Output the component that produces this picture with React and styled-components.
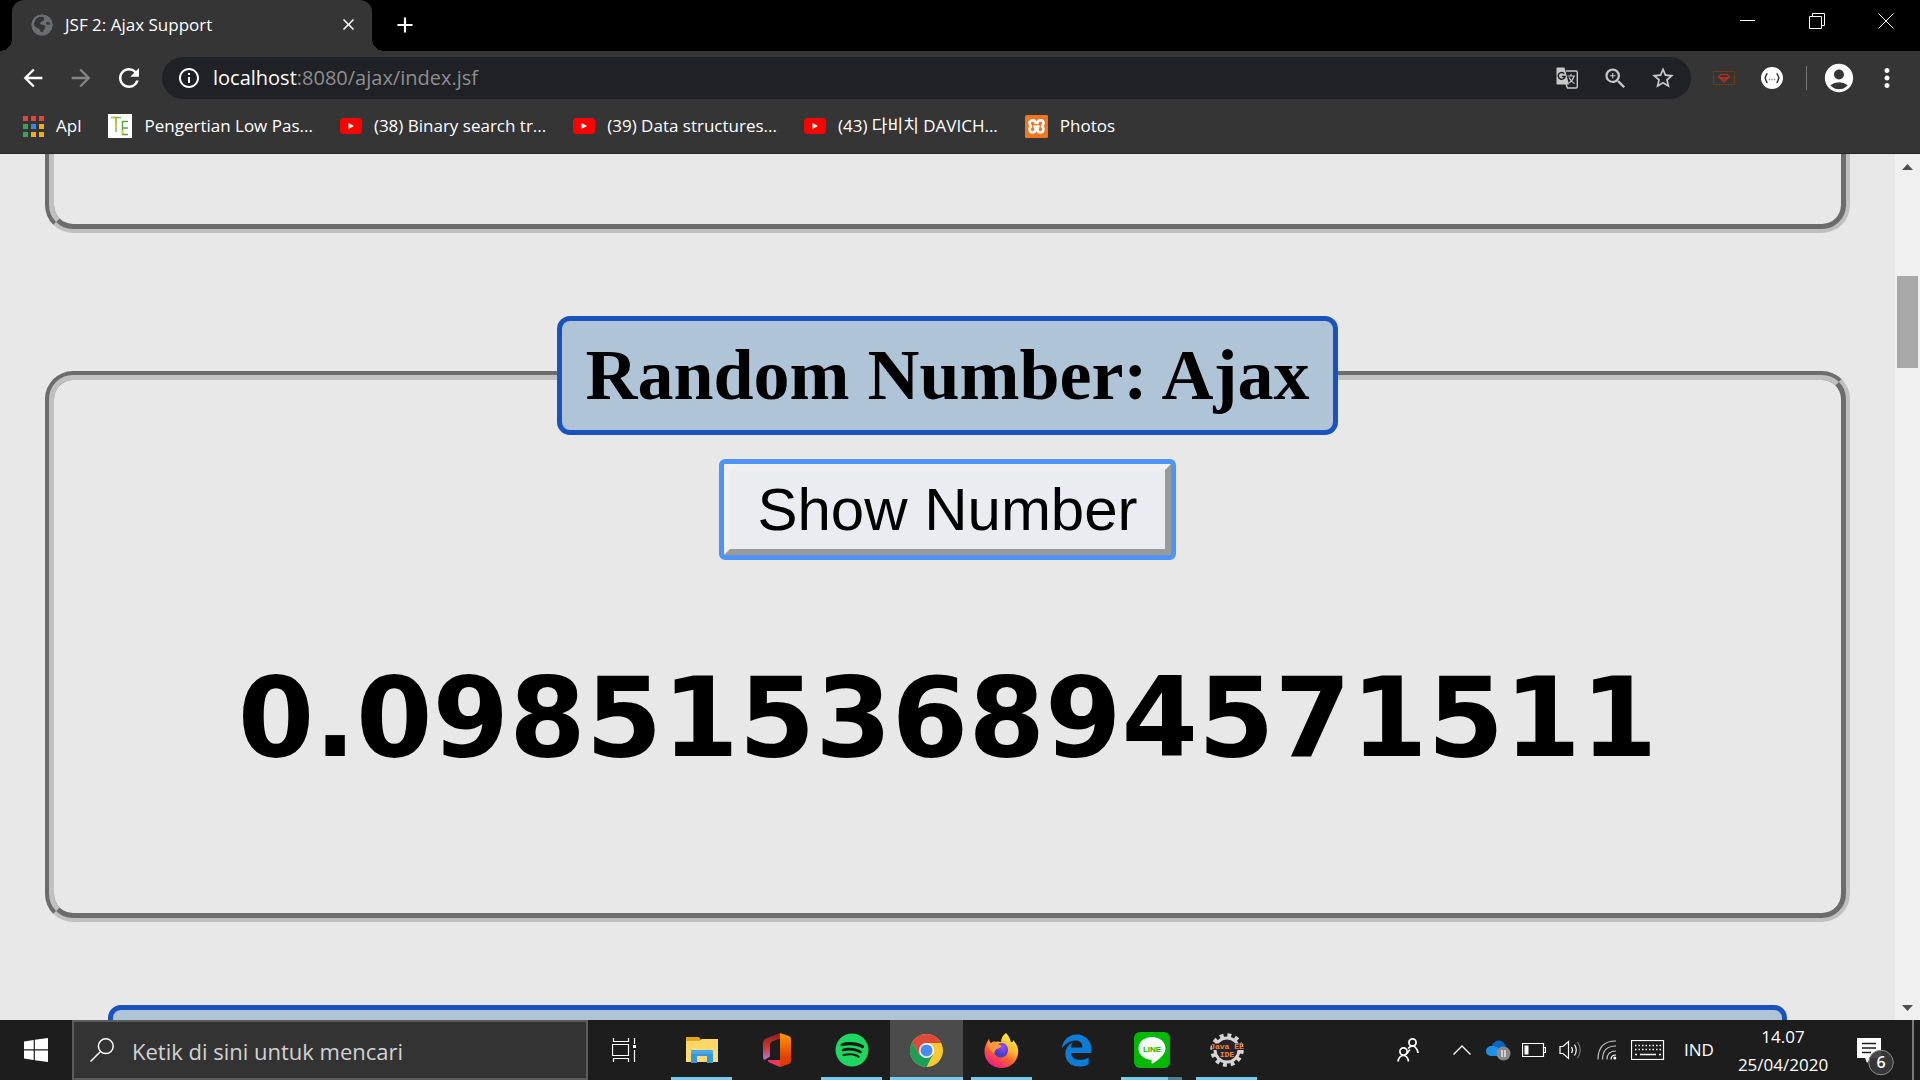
import React from "react";
import styled, { createGlobalStyle, css } from "styled-components";
import {
  MdArrowBack,
  MdArrowForward,
  MdRefresh,
  MdInfoOutline,
  MdZoomIn,
  MdStarBorder,
  MdAccountCircle,
  MdMoreVert,
  MdClose,
  MdAdd,
} from "react-icons/md";
import { FaSpotify, FaEdgeLegacy } from "react-icons/fa6";

const uiFont = `"Segoe UI", "Open Sans", "Noto Sans CJK KR", sans-serif`;

const GlobalStyle = createGlobalStyle`
  *, *::before, *::after { box-sizing: border-box; }
  body { margin: 0; background: #000; }
  svg { display: block; flex: none; }
`;

const Desktop = styled.div`
  display: flex;
  flex-direction: column;
  height: 100vh;
  overflow: hidden;
  font-family: ${uiFont};
`;

/* ---------- browser window ---------- */

const TabStrip = styled.header`
  display: flex;
  align-items: flex-start;
  height: 51px;
  flex: none;
  padding-left: 12px;
  background: #000;
`;

const Tab = styled.div`
  display: flex;
  align-items: center;
  width: 360px;
  height: 51px;
  padding: 0 12px 2px 19px;
  border-radius: 12px 12px 0 0;
  background: #353535;
  color: #fff;
  font-size: 17px;
  position: relative;

  &::before,
  &::after {
    content: "";
    position: absolute;
    bottom: 0;
    width: 12px;
    height: 12px;
  }
  &::before {
    left: -12px;
    background: radial-gradient(circle at 0 0, transparent 12px, #353535 12px);
  }
  &::after {
    right: -12px;
    background: radial-gradient(circle at 100% 0, transparent 12px, #353535 12px);
  }
`;

const TabTitle = styled.span`
  flex: 1;
  margin-left: 12px;
  white-space: nowrap;
`;

const IconButton = styled.button`
  display: flex;
  align-items: center;
  justify-content: center;
  width: ${(p) => p.$width || 48}px;
  height: ${(p) => p.$height || 42}px;
  flex: none;
  padding: 0;
  border: 0;
  background: none;
  color: ${(p) => p.$color || "#fff"};
`;

const WindowControls = styled.div`
  display: flex;
  margin-left: auto;
`;

const Toolbar = styled.nav`
  display: flex;
  align-items: center;
  height: 54px;
  flex: none;
  padding: 0 9px;
  background: #353535;
`;

const AddressBar = styled.div`
  display: flex;
  align-items: center;
  flex: 1;
  height: 42px;
  margin: 0 9px;
  padding: 0 4px 0 15px;
  border-radius: 21px;
  background: #202124;
`;

const Address = styled.div`
  flex: 1;
  margin-left: 12px;
  color: #8e8f91;
  font-size: 20px;
  line-height: 28px;
  white-space: nowrap;
  outline: none;
`;

const Host = styled.span`
  color: #fff;
`;

const Divider = styled.span`
  width: 1px;
  height: 24px;
  margin: 0 8px 0 10px;
  background: #77787a;
`;

const BookmarkBar = styled.nav`
  display: flex;
  align-items: center;
  gap: 27px;
  height: 49px;
  flex: none;
  padding: 0 23px 6px;
  border-bottom: 1px solid #262626;
  background: #353535;
`;

const Bookmark = styled.a`
  display: flex;
  align-items: center;
  gap: 12px;
  color: #fff;
  font-size: 17px;
  line-height: 24px;
  text-decoration: none;
  white-space: nowrap;
`;

/* ---------- web page ---------- */

const Viewport = styled.div`
  display: flex;
  flex: 1;
  min-height: 0;
  background: #e8e8e8;
`;

const Page = styled.main`
  flex: 1;
  min-width: 0;
  overflow: hidden;
  padding: 0 45px;
  color: #000;
  text-align: center;
`;

const Panel = styled.fieldset`
  min-width: 0;
  margin: 0 0 83px;
  padding: 0 54px ${(p) => p.$bottom || 0}px;
  border: 9px groove #c0c0c0;
  border-radius: 28px;

  ${(p) =>
    p.$continued &&
    css`
      height: 79px;
      border-top: 0;
      border-radius: 0 0 28px 28px;
    `}
`;

const PanelTitle = styled.legend`
  width: ${(p) => (p.$wide ? "100%" : "auto")};
  min-height: 119px;
  margin: 0 auto;
  padding: 13px 23px;
  border: 5px solid #1a53bf;
  border-radius: 13px;
  background: #b0c4d8;
  font: bold 72px/83px "Liberation Serif", "Times New Roman", serif;
`;

const PageButton = styled.button`
  display: block;
  margin: 29px auto 0;
  padding: 5px 27px;
  border: 6px solid;
  border-color: #f0f0f0 #9a9a9a #9a9a9a #f0f0f0;
  border-radius: 1px;
  outline: 5px solid #4f93f8;
  background: #ebebf2;
  color: #000;
  font: 60px/69px "Liberation Sans", Arial, sans-serif;
`;

const Result = styled.h2`
  margin: 98px 0 0;
  font: bold 110px/130px "DejaVu Sans", Verdana, sans-serif;
  white-space: nowrap;
`;

const ScrollTrack = styled.div`
  display: flex;
  flex-direction: column;
  align-items: center;
  width: 25px;
  flex: none;
  padding: 10px 0 9px;
  background: #f0f0f0;
`;

const ScrollThumb = styled.div`
  width: 21px;
  height: 92px;
  margin: 106px 0 auto;
  background: #a8a8a8;
`;

/* ---------- taskbar ---------- */

const Taskbar = styled.footer`
  display: flex;
  align-items: stretch;
  height: 60px;
  flex: none;
  background: #1d1d1d;
  color: #fff;
`;

const SearchBox = styled.label`
  display: flex;
  align-items: center;
  gap: 18px;
  width: 516px;
  padding: 0 16px;
  border: 2px solid #5c5c5c;
  background: #333;
`;

const SearchInput = styled.input`
  flex: 1;
  min-width: 0;
  padding: 2px 0 0;
  border: 0;
  outline: none;
  background: none;
  color: #fff;
  font: 22px/28px ${uiFont};

  &::placeholder {
    color: #d2d2d2;
    opacity: 1;
  }
`;

const Apps = styled.div`
  display: flex;
  gap: 2px;
  margin-left: 2px;
`;

const AppButton = styled.button`
  display: flex;
  flex-direction: column;
  align-items: center;
  justify-content: space-between;
  width: 73px;
  padding: 0;
  border: 0;
  background: ${(p) => (p.$state === "active" ? "#4b4b4b" : "none")};
  color: #fff;

  &::after {
    content: "";
    width: ${(p) => (p.$state === "active" ? 73 : 61)}px;
    height: 3px;
    background: ${(p) =>
      p.$grouped
        ? "linear-gradient(90deg, #76ccea 47px, #4c7f92 47px)"
        : p.$state
          ? "#76ccea"
          : "transparent"};
  }
`;

const AppIcon = styled.span`
  display: flex;
  align-items: center;
  justify-content: center;
  height: 57px;
  padding-top: 3px;
`;

const Tray = styled.div`
  display: flex;
  margin-left: auto;
`;

const TrayButton = styled(IconButton)`
  height: 60px;
  font: 17px/28px ${uiFont};
`;

const Clock = styled.time`
  display: flex;
  flex-direction: column;
  width: 110px;
  padding-top: 3px;
  font-size: 17px;
  line-height: 28px;
  text-align: center;
`;

const ShowDesktop = styled.button`
  width: 8px;
  padding: 0;
  border: 0;
  border-left: 2px solid #7a7a7a;
  background: none;
`;

/* ---------- drawings ---------- */

const GlobeIcon = () => (
  <svg width="22" height="22" viewBox="0 0 22 22">
    <circle cx="11" cy="11" r="10.5" fill="#6a6e73" />
    <path
      d="M8 3 C12 1.500 14 3 13 6 C12 8 9 7.500 9 9.500 C9 11.500 13 10 14 12 C15 14 13 15 12.500 17 C12 19 9 18.500 9 16 C8.500 14 4 14 3 11 C3 7 5 4 8 3 Z M15 8 L19 8.500 L18.500 11 L15.500 10.500 Z"
      fill="#353535"
    />
    <circle cx="11" cy="11" r="9.500" fill="none" stroke="#6a6e73" strokeWidth="2" />
  </svg>
);

const MinimizeIcon = () => (
  <svg width="16" height="16" viewBox="0 0 16 16">
    <path d="M0 7.500H15" stroke="#fff" />
  </svg>
);

const RestoreIcon = () => (
  <svg width="16" height="16" viewBox="0 0 16 16" fill="none" stroke="#fff">
    <path d="M.5 3.500H12.500V15.500H.5ZM3.500 3V.5H15.500V12.500H13" />
  </svg>
);

const CloseIcon = () => (
  <svg width="16" height="16" viewBox="0 0 16 16" stroke="#fff">
    <path d="M.5 .5 15.500 15.500M15.500 .5 .5 15.500" />
  </svg>
);

const TranslateIcon = () => (
  <svg width="22" height="22" viewBox="0 0 22 22">
    <path d="M10 4H20Q21.300 4 21.300 5.300V19.700Q21.300 21 20 21H11.500L10 17" fill="none" stroke="#c8c8c9" strokeWidth="1.400" />
    <path d="M1.500 .5H8.500L13 17.500H1.500Q.5 17.500 .5 16.500V1.500Q.5 .5 1.500 .5Z" fill="#c8c8c9" />
    <path d="M8.300 6.700A3.400 3.400 0 1 0 9 9.500H5.800" fill="none" stroke="#202124" strokeWidth="1.500" />
    <path d="M11.500 9H19M15 7V9M18 9Q16.500 14 13 16M13 10.500Q15 14.500 18.500 16.500" fill="none" stroke="#c8c8c9" strokeWidth="1.200" />
  </svg>
);

const appColors = ["#ea4335", "#ea4335", "#ea4335", "#34a853", "#2f8cf0", "#fbab05", "#34a853", "#fbab05", "#fbab05"];

const AppsGridIcon = () => (
  <svg width="21" height="21" viewBox="0 0 21 21">
    {appColors.map((fill, i) => (
      <rect key={i} x={(i % 3) * 8} y={Math.floor(i / 3) * 8} width="5" height="5" fill={fill} />
    ))}
  </svg>
);

const TeIcon = () => (
  <svg width="24" height="24" viewBox="0 0 24 24" fill="none">
    <rect width="24" height="24" fill="#fff" />
    <path d="M3 3.500H13M8 3V18" stroke="#79b848" strokeWidth="1.500" />
    <path d="M20 7.500H14.500V20.500H20M14 14H20" stroke="#5aa94a" strokeWidth="1.500" />
    <path d="M3 3.500H7M8 9V14M14.500 16V20" stroke="#d9c83a" strokeWidth="1.500" />
  </svg>
);

const YouTubeIcon = () => (
  <svg width="22" height="16" viewBox="0 0 22 16">
    <rect width="22" height="16" rx="3.500" fill="#f00" />
    <path d="M8.500 5v6l5.500-3z" fill="#fff" />
  </svg>
);

const XamppTile = () => (
  <svg width="23" height="23" viewBox="0 0 23 23">
    <rect width="23" height="23" rx="1.500" fill="#ee7623" />
    <path
      d="M10.500 8C10.500 4.500 4.500 4.500 4.500 8 4.500 10 6 10.500 6 11.500 4 12.500 4 17.500 7.500 17.500 11 17.500 10.500 14 10.500 13M12.500 8C12.500 4.500 18.500 4.500 18.500 8 18.500 10 17 10.500 17 11.500 19 12.500 19 17.500 15.500 17.500 12 17.500 12.500 14 12.500 13M9.500 11.500H13.500"
      fill="none"
      stroke="#fff"
      strokeWidth="2.600"
      strokeLinecap="round"
      strokeLinejoin="round"
    />
  </svg>
);

const RubyCardIcon = () => (
  <svg width="22" height="14" viewBox="0 0 22 14" fill="none">
    <rect x=".5" y=".5" width="21" height="13" stroke="#6b3a08" />
    <path d="M7.500 3.500H14.500L16.500 6 11 11 5.500 6ZM8 6.500H14L11 9Z" stroke="#b8301f" strokeWidth="1.200" />
  </svg>
);

const JsonIcon = () => (
  <svg width="24" height="24" viewBox="0 0 24 24">
    <circle cx="12" cy="12" r="11" fill="#fff" />
    <g fill="none" stroke="#222" strokeWidth="1.300">
      <path d="M7.500 7.500C5.500 7.500 6.500 12 4.500 12 6.500 12 5.500 16.500 7.500 16.500M16.500 7.500C18.500 7.500 17.500 12 19.500 12 17.500 12 18.500 16.500 16.500 16.500" />
      <path d="M9 13.500H15.500" stroke="#777" strokeDasharray="1.200 1.300" />
    </g>
  </svg>
);

const ScrollArrow = ({ down }) => (
  <svg width="11" height="6" viewBox="0 0 11 6">
    <path d={down ? "M0 0H11L5.500 6Z" : "M0 6H11L5.500 0Z"} fill="#505050" />
  </svg>
);

const WindowsIcon = () => (
  <svg width="24" height="24" viewBox="0 0 24 24" fill="#fff">
    <path d="M0 3.400 9.700 2V11.300H0ZM10.900 1.800 24 0V11.300H10.900ZM0 12.500H9.700V22L0 20.600ZM10.900 12.500H24V24L10.900 22.200Z" />
  </svg>
);

const SearchIcon = () => (
  <svg width="24" height="24" viewBox="0 0 24 24" fill="none" stroke="#fff" strokeWidth="1.500">
    <circle cx="15.800" cy="8.200" r="7.400" />
    <path d="M10.500 13.500.5 23.500" />
  </svg>
);

const TaskViewIcon = () => (
  <svg width="30" height="24" viewBox="0 0 30 24" fill="none" stroke="#fff">
    <path d="M1.500 0V3.500H16.500V0M1.500 24V20.500H16.500V24M.5 6.500H16.500V17.500H.5ZM22.500 0V6M22.500 12V24" strokeWidth="1.200" />
    <path d="M21 7H24V10H21Z" fill="#fff" stroke="none" />
  </svg>
);

const ExplorerIcon = () => (
  <svg width="32" height="28" viewBox="0 0 32 28">
    <path d="M0 1H13L15 4H32V26H0Z" fill="#e3a51c" />
    <path d="M0 5H13L16 3H32V26H0Z" fill="#fcd768" />
    <path d="M0 12H32V26H0Z" fill="#ffdc76" />
    <path d="M5 27V16Q5 14 7 14H25Q27 14 27 16V27H21V20H11V27Z" fill="#3698dc" />
    <path d="M5 18V16Q5 14 7 14H25Q27 14 27 16V18Z" fill="#4aa8e6" />
  </svg>
);

const OfficeIcon = () => (
  <svg width="28" height="34" viewBox="0 0 28 34">
    <defs>
      <linearGradient id="officeLeft" x2="0" y2="1">
        <stop stopColor="#8f1a1c" />
        <stop offset=".55" stopColor="#c93a38" />
        <stop offset="1" stopColor="#b779d0" />
      </linearGradient>
      <linearGradient id="officeRight" x2="0" y2="1">
        <stop stopColor="#ff9b00" />
        <stop offset=".7" stopColor="#e24202" />
        <stop offset="1" stopColor="#d63a02" />
      </linearGradient>
    </defs>
    <path d="M17 0 3 5.500Q0 7 0 10V24Q0 28 3 26L7 23.500V12Q7 9 10 8L17 5.500Z" fill="url(#officeLeft)" />
    <path d="M17 0 26 3Q28 4 28 6V28Q28 30 26 31L17 34V5Z" fill="url(#officeRight)" />
    <path d="M5 27H17V34L6.500 29.500Q4 28 5 27Z" fill="#f0365e" />
  </svg>
);

const SpotifyIcon = () => (
  <svg width="34" height="34" viewBox="0 0 34 34">
    <circle cx="17" cy="17" r="16" fill="#0c1a10" />
    <FaSpotify size={34} color="#1ed760" />
  </svg>
);

const ChromeIcon = () => (
  <svg width="33" height="33" viewBox="0 0 48 48">
    <circle cx="24" cy="24" r="24" fill="#fbc831" />
    <path d="M13.600 30 3.200 12A24 24 0 0 1 45.300 13H24Z" fill="#db4a3a" />
    <path d="M3.200 12A24 24 0 0 0 24 48L33.500 29.500 24 33 13.600 30Z" fill="#1b9f58" />
    <circle cx="24" cy="24" r="11" fill="#fff" />
    <circle cx="24" cy="24" r="8.800" fill="#4a8af4" />
  </svg>
);

const FirefoxIcon = () => (
  <svg width="35" height="35" viewBox="0 0 35 35">
    <defs>
      <linearGradient id="foxBody" x1=".85" y1=".1" x2=".3" y2="1">
        <stop stopColor="#fff04f" />
        <stop offset=".35" stopColor="#ffb72a" />
        <stop offset=".65" stopColor="#ff5a36" />
        <stop offset="1" stopColor="#f0168a" />
      </linearGradient>
      <radialGradient id="foxCore" cx=".6" cy=".3">
        <stop stopColor="#a34bff" />
        <stop offset="1" stopColor="#4a3fcb" />
      </radialGradient>
    </defs>
    <path
      d="M22 0C25 3 26 6 27 9 29 10 29 8 29 7 33 11 35 16 34 21 33 29 26 35 17.500 35 8 35 .5 28 .5 19 .5 13 3 9 5 6 5 8 6 10 7 10 8 9 10 8 12 9 14 8 15 9 17 9 17 5 19 2 22 0Z"
      fill="url(#foxBody)"
    />
    <path d="M10 18C10 13 14 10 18 10 22 10 24 14 24 17 24 22 20 24.500 16.500 24.500 12 24.500 10 21 10 18Z" fill="url(#foxCore)" />
    <path d="M5 6C5 9 7 11 9 10.500 11 10 14 11 17 12.500 18 14 15 15.500 12.500 16 11 17 11 19 10 20 5 18 3 11 5 6Z" fill="#ff9640" />
  </svg>
);

const EdgeTile = () => <FaEdgeLegacy size={33} color="#0b7cd8" />;

const LineIcon = () => (
  <svg width="36" height="36" viewBox="0 0 36 36">
    <rect width="36" height="36" rx="6" fill="#00b900" />
    <path d="M18 5C26 5 31.500 10 31.500 16.500 31.500 23 23 29 18.500 31.500 17 32 18 29 17.500 28 10 27.500 4.500 22.500 4.500 16.500 4.500 10 10 5 18 5Z" fill="#fff" />
    <text x="18" y="20" textAnchor="middle" fill="#00b900" fontFamily="Liberation Sans, sans-serif" fontWeight="bold" fontSize="8">
      LINE
    </text>
  </svg>
);

const JavaIdeIcon = () => (
  <svg width="34" height="34" viewBox="0 0 34 34">
    <circle cx="17" cy="17" r="14.500" fill="none" stroke="#d4d4d4" strokeWidth="4.500" strokeDasharray="3.800 3.792" />
    <circle cx="17" cy="17" r="12" fill="#262230" stroke="#d4d4d4" strokeWidth="3" />
    <path d="M2 10.500H32V17H2Z" fill="#262230" />
    <g fill="#f08a24" fontFamily="Liberation Mono, monospace" fontWeight="bold" fontSize="8" textAnchor="middle">
      <text x="17" y="16">Java EE</text>
      <text x="17" y="24">IDE</text>
    </g>
  </svg>
);

const PeopleIcon = () => (
  <svg width="22" height="24" viewBox="0 0 22 24" fill="none" stroke="#fff" strokeWidth="1.700">
    <circle cx="15.500" cy="4.500" r="3.600" />
    <circle cx="6.500" cy="13.500" r="3.600" />
    <path d="M11 10.500Q15.500 6 18.500 9.500 21 12 21 15M1 23.500Q2 17.500 6.500 17.500 10.500 17.500 11.500 23.500M9 16.500 13 11.500" />
  </svg>
);

const ChevronIcon = () => (
  <svg width="18" height="10" viewBox="0 0 18 10" fill="none" stroke="#fff" strokeWidth="1.400">
    <path d="M.5 9.500 9 1 17.500 9.500" />
  </svg>
);

const CloudIcon = () => (
  <svg width="25" height="21" viewBox="0 0 25 21">
    <path d="M5 16Q0 15 0 10.500 1 6 5.500 6 8 0 14 .5 19 2 19.500 7 22 9 21.500 14L18 16Z" fill="#0a64c0" />
    <path d="M5 16Q0 15 0 10.500 1 6 5.500 6 11 6 14 9L19 16Z" fill="#1c8fe6" />
    <circle cx="17.500" cy="13.500" r="7" fill="#8a8a8a" />
    <path d="M16 10V17M19 10V17" stroke="#fff" strokeWidth="1.200" />
  </svg>
);

const BatteryIcon = () => (
  <svg width="24" height="14" viewBox="0 0 24 14" fill="none" stroke="#fff">
    <path d="M.5 .5H21.500V13.500H.5ZM22 4.500H23.500V9.500H22" strokeWidth="1.200" />
    <path d="M2.500 2.500H6.500V11.500H2.500Z" fill="#fff" stroke="none" />
  </svg>
);

const VolumeIcon = () => (
  <svg width="23" height="20" viewBox="0 0 23 20" fill="none" stroke="#fff" strokeWidth="1.200">
    <path d="M1 6.500H4L9.500 1.500V18.500L4 13.500H1ZM12.500 7Q14.500 10 12.500 13M15.500 4.500Q19 10 15.500 15.500" />
    <path d="M18.500 2Q24 10 18.500 18" stroke="#777" />
  </svg>
);

const WifiIcon = () => (
  <svg width="20" height="20" viewBox="0 0 20 20" fill="none" stroke="#fff" strokeWidth="1.200">
    <path d="M1 19.500Q1 1 19 1M5.500 19.500Q5.500 6 19 6M10 19.500Q10 11 19 11" stroke="#c4c4c4" />
    <path d="M14 19.500Q14 15 19 15" />
    <circle cx="17.800" cy="18" r="1.500" fill="#fff" stroke="none" />
  </svg>
);

const KeyboardIcon = () => (
  <svg width="34" height="20" viewBox="0 0 34 20" fill="none" stroke="#fff">
    <rect x=".5" y=".5" width="32" height="19" strokeWidth="1.200" />
    <path d="M4 5.500H30M4 9.500H30" strokeWidth="1.500" strokeDasharray="1.500 2" />
    <path d="M4 14.500H6M9 14.500H25M28 14.500H30" strokeWidth="1.500" />
  </svg>
);

const NotificationIcon = () => (
  <svg width="38" height="52" viewBox="0 -14 38 52">
    <path d="M1 0H25V20H15L11 25 9 20H1Z" fill="#fff" />
    <path d="M6 5.500H20M6 10H20M6 14.500H15" stroke="#1d1d1d" strokeWidth="1.300" />
    <circle cx="25" cy="24.500" r="12.300" fill="#3a3a3a" fillOpacity=".92" stroke="#8a8a8a" />
    <text x="25" y="30" textAnchor="middle" fill="#fff" fontFamily="Open Sans, sans-serif" fontWeight="600" fontSize="16">
      6
    </text>
  </svg>
);

/* ---------- data ---------- */

const bookmarks = [
  { label: "Apl", Icon: AppsGridIcon },
  { label: "Pengertian Low Pas...", Icon: TeIcon },
  { label: "(38) Binary search tr...", Icon: YouTubeIcon },
  { label: "(39) Data structures...", Icon: YouTubeIcon },
  { label: "(43) 다비치 DAVICH...", Icon: YouTubeIcon },
  { label: "Photos", Icon: XamppTile },
];

const apps = [
  { name: "Task View", Icon: TaskViewIcon },
  { name: "File Explorer", Icon: ExplorerIcon, state: "running" },
  { name: "Office", Icon: OfficeIcon },
  { name: "Spotify", Icon: SpotifyIcon, state: "running" },
  { name: "Google Chrome", Icon: ChromeIcon, state: "active" },
  { name: "Firefox", Icon: FirefoxIcon, state: "running" },
  { name: "Microsoft Edge", Icon: EdgeTile },
  { name: "LINE", Icon: LineIcon, state: "running", grouped: true },
  { name: "Java EE IDE", Icon: JavaIdeIcon, state: "running" },
];

const tray = [
  { name: "People", Icon: PeopleIcon, width: 72 },
  { name: "Hidden icons", Icon: ChevronIcon, width: 36 },
  { name: "OneDrive", Icon: CloudIcon, width: 36 },
  { name: "Battery", Icon: BatteryIcon, width: 36 },
  { name: "Volume", Icon: VolumeIcon, width: 36 },
  { name: "Wi-Fi", Icon: WifiIcon, width: 37 },
  { name: "Touch keyboard", Icon: KeyboardIcon, width: 45 },
];

function BrowserChrome() {
  return (
    <>
      <TabStrip>
        <Tab>
          <GlobeIcon />
          <TabTitle>JSF 2: Ajax Support</TabTitle>
          <IconButton $width={24} aria-label="Close tab">
            <MdClose size={19} />
          </IconButton>
        </Tab>
        <IconButton $width={66} $height={50} aria-label="New tab">
          <MdAdd size={26} />
        </IconButton>
        <WindowControls>
          <IconButton $width={69} aria-label="Minimize"><MinimizeIcon /></IconButton>
          <IconButton $width={69} aria-label="Restore"><RestoreIcon /></IconButton>
          <IconButton $width={69} aria-label="Close"><CloseIcon /></IconButton>
        </WindowControls>
      </TabStrip>
      <Toolbar>
        <IconButton aria-label="Back"><MdArrowBack size={28} /></IconButton>
        <IconButton $color="#868686" aria-label="Forward"><MdArrowForward size={28} /></IconButton>
        <IconButton aria-label="Reload"><MdRefresh size={30} /></IconButton>
        <AddressBar>
          <MdInfoOutline size={24} color="#fff" />
          <Address role="textbox" aria-label="Address" contentEditable suppressContentEditableWarning spellCheck={false}>
            <Host>localhost</Host>:8080/ajax/index.jsf
          </Address>
          <IconButton $color="#c8c8c9" aria-label="Translate"><TranslateIcon /></IconButton>
          <IconButton $color="#c8c8c9" aria-label="Zoom"><MdZoomIn size={27} /></IconButton>
          <IconButton $color="#c8c8c9" aria-label="Bookmark this page"><MdStarBorder size={26} /></IconButton>
        </AddressBar>
        <IconButton aria-label="Ruby extension"><RubyCardIcon /></IconButton>
        <IconButton aria-label="JSON extension"><JsonIcon /></IconButton>
        <Divider />
        <IconButton aria-label="Profile"><MdAccountCircle size={34} /></IconButton>
        <IconButton aria-label="Menu"><MdMoreVert size={30} /></IconButton>
      </Toolbar>
      <BookmarkBar>
        {bookmarks.map(({ label, Icon }) => (
          <Bookmark key={label} href="#">
            <Icon />
            {label}
          </Bookmark>
        ))}
      </BookmarkBar>
    </>
  );
}

function AjaxPage() {
  return (
    <Viewport>
      <Page>
        <Panel $continued />
        <Panel $bottom={130}>
          <PanelTitle>Random Number: Ajax</PanelTitle>
          <PageButton type="button">Show Number</PageButton>
          <Result>0.09851536894571511</Result>
        </Panel>
        <Panel>
          <PanelTitle $wide />
        </Panel>
      </Page>
      <ScrollTrack>
        <ScrollArrow />
        <ScrollThumb />
        <ScrollArrow down />
      </ScrollTrack>
    </Viewport>
  );
}

function WindowsTaskbar() {
  return (
    <Taskbar>
      <TrayButton $width={72} aria-label="Start"><WindowsIcon /></TrayButton>
      <SearchBox>
        <SearchIcon />
        <SearchInput aria-label="Search" placeholder="Ketik di sini untuk mencari" />
      </SearchBox>
      <Apps>
        {apps.map(({ name, Icon, state, grouped }) => (
          <AppButton key={name} aria-label={name} $state={state} $grouped={grouped}>
            <AppIcon><Icon /></AppIcon>
          </AppButton>
        ))}
      </Apps>
      <Tray>
        {tray.map(({ name, Icon, width }) => (
          <TrayButton key={name} $width={width} aria-label={name}><Icon /></TrayButton>
        ))}
        <TrayButton $width={58}>IND</TrayButton>
        <Clock>
          <span>14.07</span>
          <span>25/04/2020</span>
        </Clock>
        <TrayButton $width={74} aria-label="Notifications"><NotificationIcon /></TrayButton>
        <ShowDesktop aria-label="Show desktop" />
      </Tray>
    </Taskbar>
  );
}

export default function App() {
  return (
    <Desktop>
      <GlobalStyle />
      <BrowserChrome />
      <AjaxPage />
      <WindowsTaskbar />
    </Desktop>
  );
}
